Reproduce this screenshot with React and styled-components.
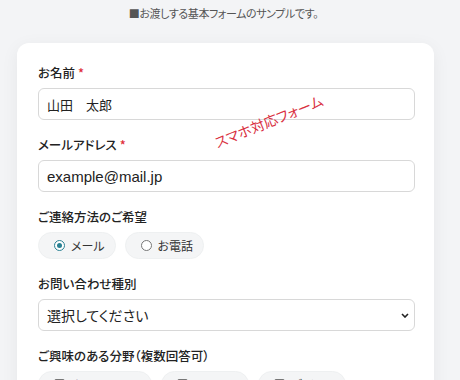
import React from 'react'
import styled, { createGlobalStyle } from 'styled-components'

const GlobalStyle = createGlobalStyle`
  body {
    margin: 0;
    background: #f3f4f6;
    font-family: 'Noto Sans CJK JP', 'Noto Sans', sans-serif;
    font-feature-settings: 'palt';
    color: #333;
  }
`

const Page = styled.div`
  padding: 4px 26px 0 17px;
`

const Intro = styled.p`
  margin: 0;
  text-align: center;
  font-size: 11px;
  letter-spacing: -0.4px;
  line-height: 18px;
  color: #555;
  padding-right: 4px;
`

const Card = styled.form`
  position: relative;
  margin-top: 21px;
  width: 417px;
  box-sizing: border-box;
  padding: 21px 19px 30px 21px;
  background: #fff;
  border-radius: 12px;
  box-shadow: 0 4px 18px rgba(0, 0, 0, 0.06);
`

const Field = styled.div`
  margin-bottom: 16px;
`

const Label = styled.label`
  display: block;
  font-size: 12.5px;
  line-height: 18px;
  font-weight: 500;
  color: #222;
  margin-bottom: 6px;
  span {
    color: #e0303a;
    margin-left: 3px;
  }
`

const TextInput = styled.input`
  display: block;
  width: 100%;
  box-sizing: border-box;
  height: 32px;
  padding: 0 8px;
  border: 1px solid #d8d8d8;
  border-radius: 6px;
  font-family: 'Liberation Sans', 'Noto Sans CJK JP', sans-serif;
  font-feature-settings: 'palt';
  font-size: ${(p) => (p.$cjk ? 13 : 15)}px;
  color: #222;
  background: #fff;
  outline: none;
`

const Choices = styled.div`
  display: flex;
  flex-wrap: wrap;
  gap: 9px;
`

const Pill = styled.label`
  display: flex;
  align-items: center;
  gap: 6px;
  height: 27px;
  padding: 0 10px 0 15px;
  box-sizing: border-box;
  border-radius: 999px;
  background: #f4f5f6;
  border: 1px solid #eef0f1;
  font-size: 12px;
  color: #333;
  white-space: nowrap;
`

const Radio = styled.input`
  appearance: none;
  margin: 0;
  width: 11px;
  height: 11px;
  border-radius: 50%;
  border: 1px solid #777;
  background: #fff;
  display: grid;
  place-items: center;
  &:checked {
    border-color: #2a8193;
  }
  &:checked::after {
    content: '';
    width: 5px;
    height: 5px;
    border-radius: 50%;
    background: #2a8193;
  }
`

const Check = styled.input`
  appearance: none;
  margin: 0;
  width: 11px;
  height: 11px;
  border-radius: 2px;
  border: 1px solid #777;
  background: #fff;
`

const SelectWrap = styled.div`
  position: relative;
  svg {
    position: absolute;
    right: 6px;
    top: 14px;
    pointer-events: none;
  }
`

const Select = styled.select`
  display: block;
  width: 100%;
  height: 32px;
  box-sizing: border-box;
  padding: 0 8px;
  appearance: none;
  border: 1px solid #d8d8d8;
  border-radius: 6px;
  background: #fff;
  font-family: 'Noto Sans CJK JP', sans-serif;
  font-feature-settings: 'palt';
  font-size: 14px;
  color: #222;
`

const Stamp = styled.div`
  position: absolute;
  left: 194px;
  top: 68px;
  transform: rotate(-22deg);
  font-size: 14px;
  color: #d9303f;
  white-space: nowrap;
`

const interests = ['ホームページ', 'システム', 'デザイン']

export default function App() {
  return (
    <Page>
      <GlobalStyle />
      <Intro>■お渡しする基本フォームのサンプルです。</Intro>
      <Card onSubmit={(e) => e.preventDefault()}>
        <Stamp>スマホ対応フォーム</Stamp>
        <Field>
          <Label htmlFor='name'>
            お名前<span>*</span>
          </Label>
          <TextInput id='name' $cjk defaultValue='山田　太郎' />
        </Field>
        <Field>
          <Label htmlFor='mail'>
            メールアドレス<span>*</span>
          </Label>
          <TextInput id='mail' defaultValue='example@mail.jp' />
        </Field>
        <Field>
          <Label as='div'>ご連絡方法のご希望</Label>
          <Choices>
            <Pill>
              <Radio type='radio' name='contact' defaultChecked />
              メール
            </Pill>
            <Pill>
              <Radio type='radio' name='contact' />
              お電話
            </Pill>
          </Choices>
        </Field>
        <Field>
          <Label htmlFor='kind'>お問い合わせ種別</Label>
          <SelectWrap>
            <Select id='kind' defaultValue=''>
              <option value=''>選択してください</option>
              <option>サービスについて</option>
              <option>お見積り</option>
              <option>その他</option>
            </Select>
            <svg width='8' height='5' viewBox='0 0 8 5'>
              <path d='M1 1l3 3 3-3' fill='none' stroke='#222' strokeWidth='1.6' />
            </svg>
          </SelectWrap>
        </Field>
        <Field>
          <Label as='div'>ご興味のある分野（複数回答可）</Label>
          <Choices>
            {interests.map((item, i) => (
              <Pill key={i}>
                <Check type='checkbox' />
                {item}
              </Pill>
            ))}
          </Choices>
        </Field>
      </Card>
    </Page>
  )
}
